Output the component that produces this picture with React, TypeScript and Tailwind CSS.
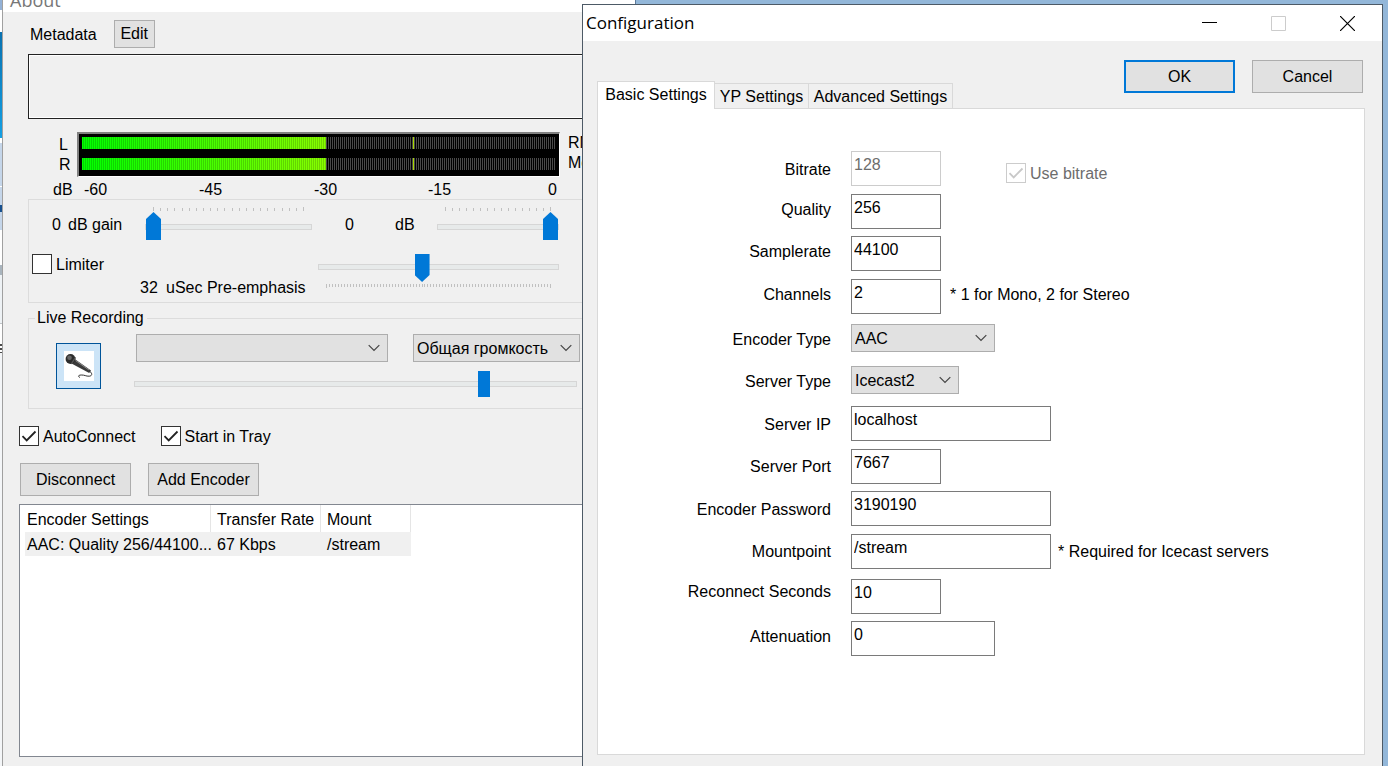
import React from "react";
import clsx from "clsx";

const THUMB =
  "appearance-none bg-transparent block m-0 [&::-webkit-slider-runnable-track]:h-[6px] [&::-webkit-slider-runnable-track]:border [&::-webkit-slider-runnable-track]:border-[#d6d6d6] [&::-webkit-slider-runnable-track]:bg-[#e7eaea] [&::-webkit-slider-thumb]:appearance-none [&::-webkit-slider-thumb]:bg-[#0078d7] [&::-webkit-slider-thumb]:border-0 [&::-webkit-slider-thumb]:rounded-none";
const THUMB_UP =
  "h-7 [&::-webkit-slider-thumb]:w-[15px] [&::-webkit-slider-thumb]:h-7 [&::-webkit-slider-thumb]:-mt-[13px] [&::-webkit-slider-thumb]:[clip-path:polygon(50%_0,100%_7px,100%_100%,0_100%,0_7px)]";
const THUMB_DOWN =
  "h-[26px] [&::-webkit-slider-thumb]:w-[15px] [&::-webkit-slider-thumb]:h-7 [&::-webkit-slider-thumb]:-mt-[11px] [&::-webkit-slider-thumb]:[clip-path:polygon(0_0,100%_0,100%_21px,50%_100%,0_21px)]";
const THUMB_BOX =
  "h-[26px] [&::-webkit-slider-thumb]:w-3 [&::-webkit-slider-thumb]:h-[26px] [&::-webkit-slider-thumb]:-mt-[11px]";

function Slider({ label, kind, value, max, className }: { label: string; kind: string; value: number; max: number; className: string }) {
  return <input type="range" aria-label={label} min={0} max={max} defaultValue={value} className={clsx(THUMB, kind, className)} />;
}

function Ticks({ count, className, flip }: { count: number; className: string; flip?: boolean }) {
  return (
    <div className={clsx("flex justify-between h-1", flip ? "items-start" : "items-end", className)}>
      {Array.from({ length: count }, (_, i) => (
        <span key={i} className={clsx("w-px bg-[#c0c0c0]", i === 0 || i === count - 1 ? "h-1" : "h-[3px]")} />
      ))}
    </div>
  );
}

function Check({ id, label, checked, disabled }: { id: string; label: string; checked?: boolean; disabled?: boolean }) {
  return (
    <label htmlFor={id} className={clsx("flex items-start h-5 gap-1 leading-[22px]", disabled && "text-[#6d6d6d]")}>
      <span className="relative block w-5 h-5">
        <input
          id={id}
          type="checkbox"
          defaultChecked={checked}
          disabled={disabled}
          className="peer block appearance-none w-5 h-5 bg-white border border-[#333] disabled:border-[#ccc]"
        />
        <svg viewBox="0 0 20 20" fill="none" stroke="currentColor" strokeWidth="1.8" className="absolute inset-0 pointer-events-none hidden peer-checked:block text-[#222] peer-disabled:text-[#c8c8c8]">
          <path d="M3.5 10.2 7.7 14.4 16.5 5.5" />
        </svg>
      </span>
      {label}
    </label>
  );
}

function Button({ children, className }: { children: React.ReactNode; className?: string }) {
  return <button type="button" className={clsx("bg-[#e1e1e1]", className)}>{children}</button>;
}

function Dropdown({ id, value, label, className }: { id: string; value: string; label?: string; className: string }) {
  return (
    <span className={clsx("relative block h-7", className)}>
      <select id={id} aria-label={label} className="appearance-none block w-full h-7 bg-[#e1e1e1] border border-[#adadad] pl-[3px] pt-[2px] leading-5">
        <option>{value}</option>
      </select>
      <svg viewBox="0 0 12 8" fill="none" stroke="#444" strokeWidth="1.2" className="absolute right-2 top-[10px] w-3 h-2 pointer-events-none">
        <path d="M.7 1.2 6 6.5 11.3 1.2" />
      </svg>
    </span>
  );
}

function MeterBar() {
  return (
    <div className="relative h-3 bg-[repeating-linear-gradient(90deg,#4a4a4a_0_1px,#000_1px_2px)]">
      <div className="h-3 w-[244px] bg-[repeating-linear-gradient(90deg,transparent_0_1px,rgba(0,0,0,0.16)_1px_2px),linear-gradient(90deg,#00ff00,#88ff00)]" />
      <div className="absolute left-[331px] top-0 w-px h-3 bg-[#a8d800]" />
    </div>
  );
}

function Microphone() {
  return (
    <svg viewBox="0 0 30 30" className="w-[30px] h-[30px] bg-white">
      <path d="M10 7.5 27 19.6 25.2 22 7.5 12.5z" fill="#3a3a3a" />
      <path d="M11.5 9.5 25 19" stroke="#8a8a8a" strokeWidth="1" />
      <path d="M26 20.5c2.600 2 2.200 4.500-.8 4.700-3.200.2-4.700-1.400-8-1.200-3.200.2-3.400 1.500-1.200 2.500" fill="none" stroke="#333" strokeWidth="1" />
      <circle cx="6.500" cy="8" r="4.900" fill="#2c2c2c" />
      <circle cx="5.500" cy="6.700" r="2.300" fill="#666" />
      <path d="M11.500 6.300 7.300 13" stroke="#555" strokeWidth="1.300" />
    </svg>
  );
}

function DesktopEdge() {
  return (
    <div className="w-[2px] shrink-0 flex flex-col bg-[#f4f6f8]">
      <div className="h-[10px] bg-[#93b1d6]" />
      <div className="h-[22px] bg-white" />
      <div className="h-[106px] bg-linear-to-b from-[#0a72b0] to-[#14a0e4]" />
      <div className="h-[5px] bg-white" />
      <div className="h-[43px] bg-[#c5d6ea]" />
      <div className="h-px bg-white" />
      <div className="h-[18px] bg-[#c5d6ea]" />
      <div className="h-[7px] bg-[#17508e]" />
      <div className="h-[18px] bg-[#c5d6ea]" />
      <div className="h-[35px] bg-white" />
      <div className="h-[10px] bg-[#a9b4bd]" />
      <div className="h-[48px] bg-[#eef2f5]" />
      <div className="h-px bg-[#c0c4c8]" />
      <div className="h-[20px] bg-white" />
      <div className="h-[2px] bg-[#4a4a4a]" />
      <div className="h-[2px] bg-white" />
      <div className="h-[2px] bg-[#4a4a4a]" />
      <div className="h-[2px] bg-white" />
      <div className="h-px bg-[#4a4a4a]" />
    </div>
  );
}

function MainWindow() {
  return (
    <main className="w-[634px] shrink-0 flex flex-col bg-[#f0f0f0] border-l border-l-[#a0a0a0] border-r border-r-[#5c7a99]">
      <header className="h-3 flex items-end overflow-hidden bg-white pl-[7px]">
        <h1 className="font-['Open_Sans',sans-serif] text-[18px] leading-6 text-[#777]">About</h1>
      </header>

      <section className="flex items-center h-[42px] pl-[27px] pt-[2px] gap-[17px]">
        <span className="leading-5 pt-[2px]">Metadata</span>
        <Button className="w-[41px] h-7 border border-[#adadad]">Edit</Button>
      </section>
      <div className="ml-[25px] mr-4 h-[65px] border border-[#222] shadow-[inset_0_0_0_1px_#fff]" />

      <section className="mt-[13px] flex">
        <div className="w-[74px] pl-[56px] pt-[3px]">
          <div className="leading-5">L</div>
          <div className="leading-5">R</div>
        </div>
        <div className="w-[483px] h-[45px] bg-black border-t-2 border-l-2 border-t-[#808080] border-l-[#808080] border-r border-b border-r-white border-b-white p-[3px] flex flex-col gap-[9px]">
          <MeterBar />
          <MeterBar />
        </div>
        <div className="pl-2 pt-px">
          <div className="leading-5">RMS</div>
          <div className="leading-5">Meters</div>
        </div>
      </section>
      <div className="flex h-[22px] pl-[50px] items-center leading-5 pt-1">
        <span className="w-[31px]">dB</span>
        <span className="w-[115px]">-60</span>
        <span className="w-[115px]">-45</span>
        <span className="w-[114px]">-30</span>
        <span className="w-[115px]">-15</span>
        <span className="pl-[5px]">0</span>
      </div>

      <section className="ml-[25px] mr-4 h-[104px] border border-[#dcdcdc] pt-[7px] leading-5">
        <div className="flex h-[34px]">
          <span className="w-4 pt-2 ml-[23px]">0</span>
          <span className="pt-2 w-[77px]">dB gain</span>
          <div className="w-[167px]">
            <Ticks count={22} className="mx-2" />
            <Slider label="dB gain" kind={THUMB_UP} value={0} max={21} className="w-full mt-[2px]" />
          </div>
          <span className="w-[50px] pl-[33px] pt-2">0</span>
          <span className="w-[75px] pl-[33px] pt-2">dB</span>
          <div className="w-[122px]">
            <Ticks count={16} className="mx-2" />
            <Slider label="dB level" kind={THUMB_UP} value={15} max={15} className="w-full mt-[2px]" />
          </div>
        </div>
        <div className="flex mt-[13px] h-7 pl-[3px]">
          <div className="w-[286px]">
            <Check id="limiter" label="Limiter" />
          </div>
          <Slider label="Pre-emphasis" kind={THUMB_DOWN} value={32} max={75} className="w-[241px]" />
        </div>
        <div className="flex h-5 -mt-1 pl-[111px]">
          <span className="w-[26px]">32</span>
          <span className="w-[160px]">uSec Pre-emphasis</span>
          <Ticks count={76} flip className="w-[225px] mt-[6px]" />
        </div>
      </section>

      <fieldset className="ml-[25px] mr-4 mt-[5px] h-[101px] border border-[#dcdcdc]">
        <legend className="ml-[6px] pl-[2px] pr-[3px] leading-5">Live Recording</legend>
        <div className="flex pl-[27px]">
          <button type="button" aria-label="Record" className="mt-[15px] w-[45px] h-[46px] shrink-0 border border-[#005499] bg-[#cce4f7] flex items-center justify-center">
            <Microphone />
          </button>
          <div className="pl-[33px] pt-[6px]">
            <div className="flex pl-[2px]">
              <Dropdown id="device" label="Recording device" value="" className="w-[252px]" />
              <Dropdown id="channel" label="Recording channel" value="Общая громкость" className="w-[167px] ml-[25px]" />
            </div>
            <Slider label="Recording volume" kind={THUMB_BOX} value={80} max={100} className="w-[443px] mt-[9px]" />
          </div>
        </div>
      </fieldset>

      <section className="mt-[17px] pl-4 flex gap-[25px]">
        <Check id="auto" label="AutoConnect" checked />
        <Check id="tray" label="Start in Tray" checked />
      </section>
      <section className="mt-[17px] pl-[17px] flex gap-[17px]">
        <Button className="w-[111px] h-[33px] border border-[#adadad]">Disconnect</Button>
        <Button className="w-[111px] h-[33px] border border-[#adadad]">Add Encoder</Button>
      </section>

      <section className="mt-2 mb-[9px] mx-4 grow bg-white border border-[#828790]">
        <table className="ml-[5px] w-[386px] table-fixed border-separate border-spacing-0 text-left leading-5">
          <thead>
            <tr className="h-[27px]">
              <th className="w-[186px] p-0 pt-[2px] pl-[2px] font-normal border-r border-[#e5e5e5]">Encoder Settings</th>
              <th className="w-[110px] p-0 pt-[2px] pl-[6px] font-normal border-r border-[#e5e5e5]">Transfer Rate</th>
              <th className="w-[90px] p-0 pt-[2px] pl-[6px] font-normal border-r border-[#e5e5e5]">Mount</th>
            </tr>
          </thead>
          <tbody>
            <tr className="h-6 bg-[#f0f0f0]">
              <td className="p-0 pt-[2px] pl-[2px] whitespace-nowrap">AAC: Quality 256/44100...</td>
              <td className="p-0 pt-[2px] pl-[6px]">67 Kbps</td>
              <td className="p-0 pt-[2px] pl-[6px]">/stream</td>
            </tr>
          </tbody>
        </table>
      </section>
    </main>
  );
}

function Row({ id, label, row, lead, children }: { id: string; label: string; row: string; lead: string; children: React.ReactNode }) {
  return (
    <div className={clsx("flex items-start", row)}>
      <label htmlFor={id} className={clsx("w-[233px] mr-5 text-right", lead)}>{label}</label>
      {children}
    </div>
  );
}

function Field({ id, value, width, disabled }: { id: string; value: string; width: string; disabled?: boolean }) {
  return (
    <input
      id={id}
      type="text"
      defaultValue={value}
      disabled={disabled}
      className={clsx("h-[35px] bg-white border border-[#7a7a7a] pl-[2px] pb-[7px] leading-5 disabled:border-[#ccc] disabled:text-[#6d6d6d]", width)}
    />
  );
}

function ConfigurationDialog() {
  return (
    <div role="dialog" aria-labelledby="config-title" className="absolute left-[582px] right-[5px] top-1 bottom-0 flex flex-col bg-[#f0f0f0] border border-b-0 border-[#4d5a66]">
      <header className="h-9 shrink-0 flex items-center bg-white pl-[3px]">
        <h2 id="config-title" className="grow font-['Open_Sans',sans-serif] text-[17px] leading-6">Configuration</h2>
        <button type="button" aria-label="Minimize" className="w-[70px] h-9 flex items-center justify-center">
          <svg viewBox="0 0 15 15" className="w-[15px] h-[15px]"><path d="M0 6.500h15" stroke="#000" /></svg>
        </button>
        <button type="button" aria-label="Maximize" disabled className="w-[68px] h-9 flex items-center justify-center">
          <svg viewBox="0 0 15 15" className="w-[15px] h-[15px]"><path d="M.5.5h14v14H.5z" fill="none" stroke="#ccc" /></svg>
        </button>
        <button type="button" aria-label="Close" className="w-[70px] h-9 flex items-center justify-center">
          <svg viewBox="0 0 15 15" className="w-[15px] h-[15px]"><path d="M0 0 15 15M15 0 0 15" stroke="#000" strokeWidth="1.200" /></svg>
        </button>
      </header>

      <div className="pl-[14px] pr-[17px] pb-[11px] grow flex flex-col">
        <div className="flex justify-between h-[67px]">
          <div role="tablist" className="flex items-end">
            <button type="button" role="tab" aria-selected="true" className="relative z-10 -mb-px h-7 w-[118px] pb-[2px] bg-white border border-b-0 border-[#d9d9d9] leading-5">Basic Settings</button>
            <button type="button" role="tab" aria-selected="false" className="h-[25px] w-[94px] pt-px border border-l-0 border-b-0 border-[#d9d9d9] leading-5">YP Settings</button>
            <button type="button" role="tab" aria-selected="false" className="h-[25px] w-[144px] pt-px border border-l-0 border-b-0 border-[#d9d9d9] leading-5">Advanced Settings</button>
          </div>
          <div className="flex gap-[17px] pt-[19px] pr-[2px]">
            <Button className="w-[111px] h-[33px] border-2 border-[#0078d7]">OK</Button>
            <Button className="w-[111px] h-[33px] border border-[#adadad]">Cancel</Button>
          </div>
        </div>

        <form className="grow bg-white border border-[#d9d9d9] pt-[42px]">
          <Row id="bitrate" label="Bitrate" row="h-[43px]" lead="leading-[38px]">
            <Field id="bitrate" value="128" width="w-[90px]" disabled />
            <div className="ml-[65px] mt-3">
              <Check id="use-bitrate" label="Use bitrate" checked disabled />
            </div>
          </Row>
          <Row id="quality" label="Quality" row="h-[42px]" lead="leading-8">
            <Field id="quality" value="256" width="w-[90px]" />
          </Row>
          <Row id="samplerate" label="Samplerate" row="h-[43px]" lead="leading-8">
            <Field id="samplerate" value="44100" width="w-[90px]" />
          </Row>
          <Row id="channels" label="Channels" row="h-[45px]" lead="leading-8">
            <Field id="channels" value="2" width="w-[90px]" />
            <span className="ml-[9px] leading-8">* 1 for Mono, 2 for Stereo</span>
          </Row>
          <Row id="encoder-type" label="Encoder Type" row="h-[42px]" lead="leading-8">
            <Dropdown id="encoder-type" value="AAC" className="w-[144px]" />
          </Row>
          <Row id="server-type" label="Server Type" row="h-10" lead="leading-8">
            <Dropdown id="server-type" value="Icecast2" className="w-[108px]" />
          </Row>
          <Row id="server-ip" label="Server IP" row="h-[43px]" lead="leading-[38px]">
            <Field id="server-ip" value="localhost" width="w-[200px]" />
          </Row>
          <Row id="server-port" label="Server Port" row="h-[42px]" lead="leading-[36px]">
            <Field id="server-port" value="7667" width="w-[90px]" />
          </Row>
          <Row id="password" label="Encoder Password" row="h-[43px]" lead="leading-[38px]">
            <Field id="password" value="3190190" width="w-[200px]" />
          </Row>
          <Row id="mountpoint" label="Mountpoint" row="h-[45px]" lead="leading-[36px]">
            <Field id="mountpoint" value="/stream" width="w-[200px]" />
            <span className="ml-[7px] leading-[36px]">* Required for Icecast servers</span>
          </Row>
          <Row id="reconnect" label="Reconnect Seconds" row="h-[42px]" lead="leading-[26px]">
            <Field id="reconnect" value="10" width="w-[90px]" />
          </Row>
          <Row id="attenuation" label="Attenuation" row="h-[42px]" lead="leading-8">
            <Field id="attenuation" value="0" width="w-[144px]" />
          </Row>
        </form>
      </div>
    </div>
  );
}

export default function App() {
  return (
    <div className="relative min-h-screen flex overflow-hidden bg-[#93b7d9] text-black text-[16px] font-['Liberation_Sans',Arial,sans-serif]">
      <DesktopEdge />
      <MainWindow />
      <ConfigurationDialog />
    </div>
  );
}
